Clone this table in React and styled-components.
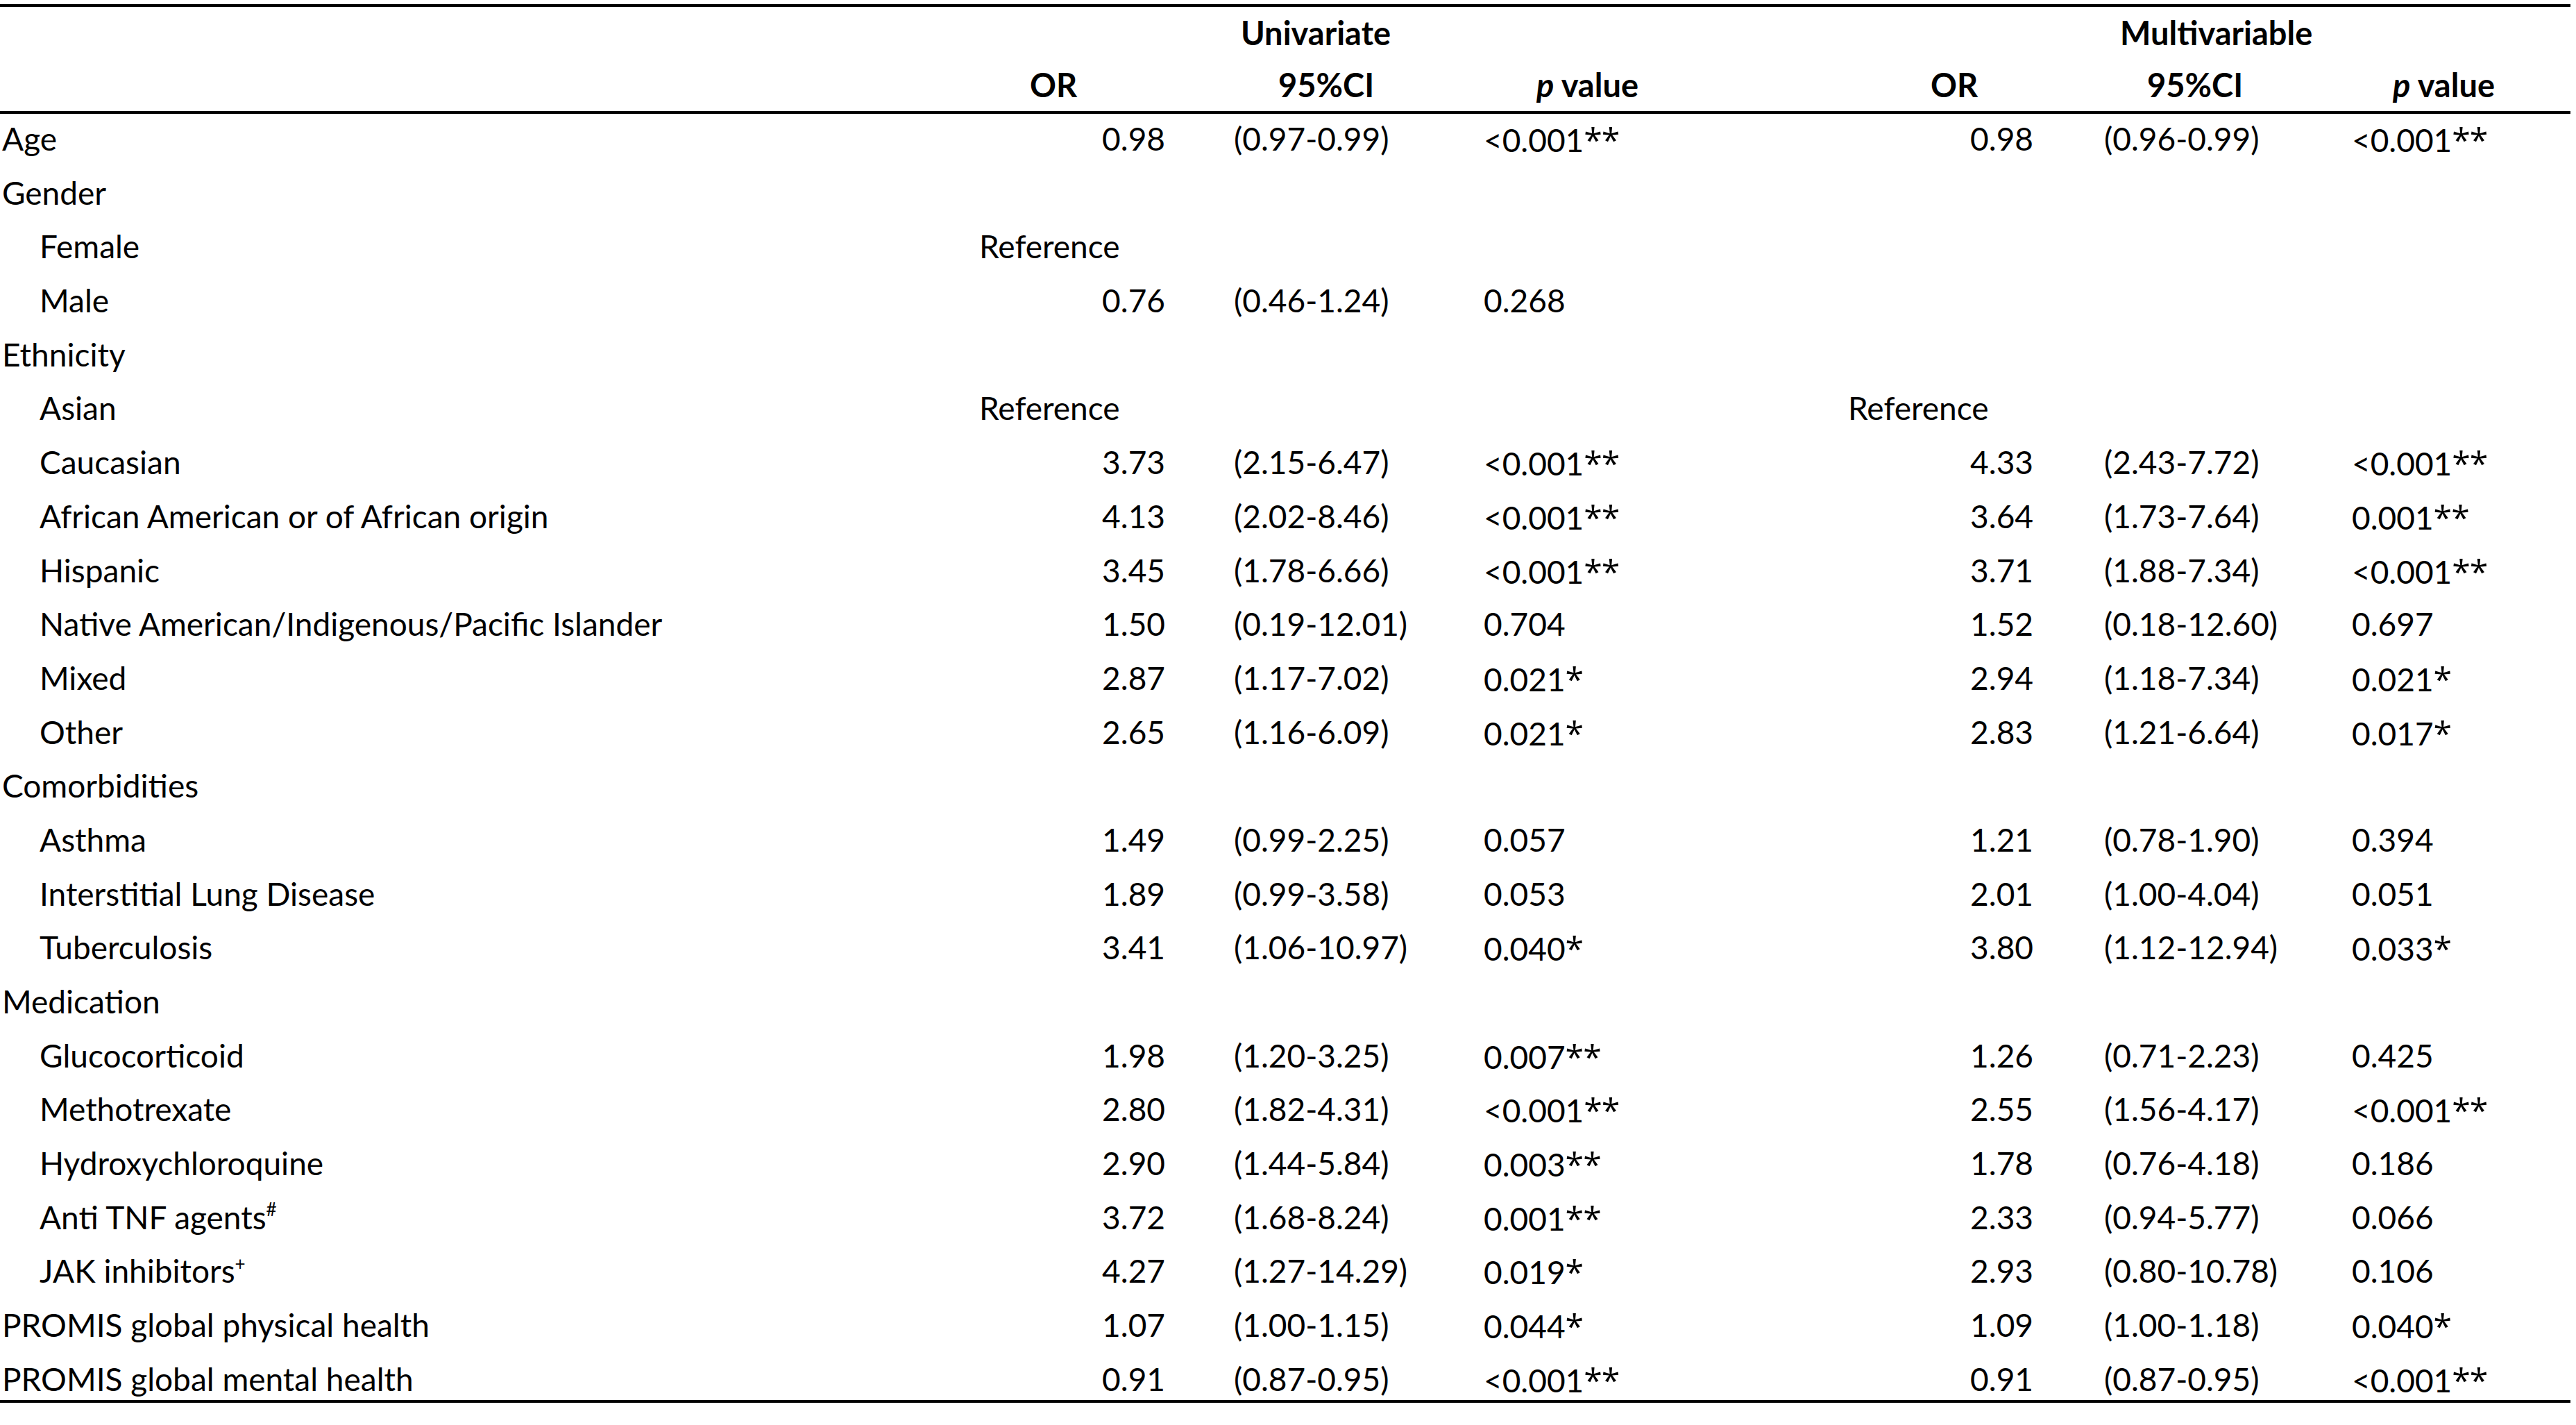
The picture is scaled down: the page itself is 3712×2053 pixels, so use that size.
import React from 'react';
import styled, { createGlobalStyle } from 'styled-components';

const GlobalStyle = createGlobalStyle`
  html, body {
    margin: 0;
    padding: 0;
    background: #ffffff;
  }
  body {
    font-family: Lato, "Open Sans", "Liberation Sans", sans-serif;
    color: #000000;
  }
`;

const Page = styled.div`
  width: 3704px;
  padding-top: 6px;
`;

const Head = styled.div`
  border-top: 4px solid #000;
  border-bottom: 4px solid #000;
`;

const Body = styled.div`
  border-bottom: 4px solid #000;
`;

const COLS = '1400px 300px 400px 550px 310px 380px 364px';

const HeadRow = styled.div`
  display: grid;
  grid-template-columns: ${COLS};
  height: 75px;
  line-height: 75px;
  font-size: 47px;
  font-weight: 700;
  white-space: nowrap;
`;

const Row = styled.div`
  display: grid;
  grid-template-columns: ${COLS};
  height: 77.7px;
  line-height: 72.4px;
  font-size: 46px;
  white-space: nowrap;

  &:last-child {
    height: 66px;
  }
`;

const Cell = styled.div`
  text-align: ${p => p.$align || 'left'};
  padding-left: ${p => (p.$align === 'right' ? 0 : p.$inset || 0)}px;
  padding-right: ${p => (p.$align === 'right' ? p.$inset || 0 : 0)}px;
`;

const Label = styled(Cell)`
  padding-left: ${p => (p.$sub ? 57 : 3)}px;
`;

const Sup = styled.sup`
  font-size: 26px;
  line-height: 0;
  position: relative;
  top: -2px;
`;

const Stars = styled.span`
  font-family: "Open Sans", "Liberation Sans", sans-serif;
  font-size: 1.05em;
  letter-spacing: -1px;
`;

const Em = styled.i`
  font-style: italic;
`;

const rows = [
  { label: 'Age', u: ['0.98', '(0.97-0.99)', '<0.001**'], m: ['0.98', '(0.96-0.99)', '<0.001**'] },
  { label: 'Gender' },
  { label: 'Female', sub: true, u: ['Reference'] },
  { label: 'Male', sub: true, u: ['0.76', '(0.46-1.24)', '0.268'] },
  { label: 'Ethnicity' },
  { label: 'Asian', sub: true, u: ['Reference'], m: ['Reference'] },
  { label: 'Caucasian', sub: true, u: ['3.73', '(2.15-6.47)', '<0.001**'], m: ['4.33', '(2.43-7.72)', '<0.001**'] },
  { label: 'African American or of African origin', sub: true, u: ['4.13', '(2.02-8.46)', '<0.001**'], m: ['3.64', '(1.73-7.64)', '0.001**'] },
  { label: 'Hispanic', sub: true, u: ['3.45', '(1.78-6.66)', '<0.001**'], m: ['3.71', '(1.88-7.34)', '<0.001**'] },
  { label: 'Native American/Indigenous/Pacific Islander', sub: true, u: ['1.50', '(0.19-12.01)', '0.704'], m: ['1.52', '(0.18-12.60)', '0.697'] },
  { label: 'Mixed', sub: true, u: ['2.87', '(1.17-7.02)', '0.021*'], m: ['2.94', '(1.18-7.34)', '0.021*'] },
  { label: 'Other', sub: true, u: ['2.65', '(1.16-6.09)', '0.021*'], m: ['2.83', '(1.21-6.64)', '0.017*'] },
  { label: 'Comorbidities' },
  { label: 'Asthma', sub: true, u: ['1.49', '(0.99-2.25)', '0.057'], m: ['1.21', '(0.78-1.90)', '0.394'] },
  { label: 'Interstitial Lung Disease', sub: true, u: ['1.89', '(0.99-3.58)', '0.053'], m: ['2.01', '(1.00-4.04)', '0.051'] },
  { label: 'Tuberculosis', sub: true, u: ['3.41', '(1.06-10.97)', '0.040*'], m: ['3.80', '(1.12-12.94)', '0.033*'] },
  { label: 'Medication' },
  { label: 'Glucocorticoid', sub: true, u: ['1.98', '(1.20-3.25)', '0.007**'], m: ['1.26', '(0.71-2.23)', '0.425'] },
  { label: 'Methotrexate', sub: true, u: ['2.80', '(1.82-4.31)', '<0.001**'], m: ['2.55', '(1.56-4.17)', '<0.001**'] },
  { label: 'Hydroxychloroquine', sub: true, u: ['2.90', '(1.44-5.84)', '0.003**'], m: ['1.78', '(0.76-4.18)', '0.186'] },
  { label: 'Anti TNF agents', mark: '#', sub: true, u: ['3.72', '(1.68-8.24)', '0.001**'], m: ['2.33', '(0.94-5.77)', '0.066'] },
  { label: 'JAK inhibitors', mark: '+', sub: true, u: ['4.27', '(1.27-14.29)', '0.019*'], m: ['2.93', '(0.80-10.78)', '0.106'] },
  { label: 'PROMIS global physical health', u: ['1.07', '(1.00-1.15)', '0.044*'], m: ['1.09', '(1.00-1.18)', '0.040*'] },
  { label: 'PROMIS global mental health', u: ['0.91', '(0.87-0.95)', '<0.001**'], m: ['0.91', '(0.87-0.95)', '<0.001**'] },
];

// insets per model: OR right inset, Reference left inset, CI left inset, p left inset
const layout = {
  u: { or: 21, ref: 11, ci: 78, p: 38 },
  m: { or: 30, ref: 13, ci: 72, p: 49 },
};

function PValue({ text }) {
  if (!text) return null;
  const m = text.match(/^(.*?)(\*+)$/);
  if (!m) return text;
  return (
    <>
      {m[1]}
      <Stars>{m[2]}</Stars>
    </>
  );
}

function ModelCells({ values, pos }) {
  const [or, ci, p] = values || [];
  const isRef = or === 'Reference';
  return (
    <>
      {isRef ? (
        <Cell $inset={pos.ref}>{or}</Cell>
      ) : (
        <Cell $align="right" $inset={pos.or}>{or}</Cell>
      )}
      <Cell $inset={pos.ci}>{ci}</Cell>
      <Cell $inset={pos.p}><PValue text={p} /></Cell>
    </>
  );
}

export default function App() {
  return (
    <Page>
      <GlobalStyle />
      <Head>
        <HeadRow>
          <Cell />
          <Cell />
          <Cell $inset={88}>Univariate</Cell>
          <Cell />
          <Cell />
          <Cell $inset={95}>Multivariable</Cell>
          <Cell />
        </HeadRow>
        <HeadRow>
          <Cell />
          <Cell $inset={84}>OR</Cell>
          <Cell $inset={142}>95%CI</Cell>
          <Cell $inset={114}><Em>p</Em> value</Cell>
          <Cell $inset={132}>OR</Cell>
          <Cell $inset={134}>95%CI</Cell>
          <Cell $inset={108}><Em>p</Em> value</Cell>
        </HeadRow>
      </Head>
      <Body>
        {rows.map(r => (
          <Row key={r.label}>
            <Label $sub={r.sub}>
              {r.label}
              {r.mark && <Sup>{r.mark}</Sup>}
            </Label>
            <ModelCells values={r.u} pos={layout.u} />
            <ModelCells values={r.m} pos={layout.m} />
          </Row>
        ))}
      </Body>
    </Page>
  );
}
